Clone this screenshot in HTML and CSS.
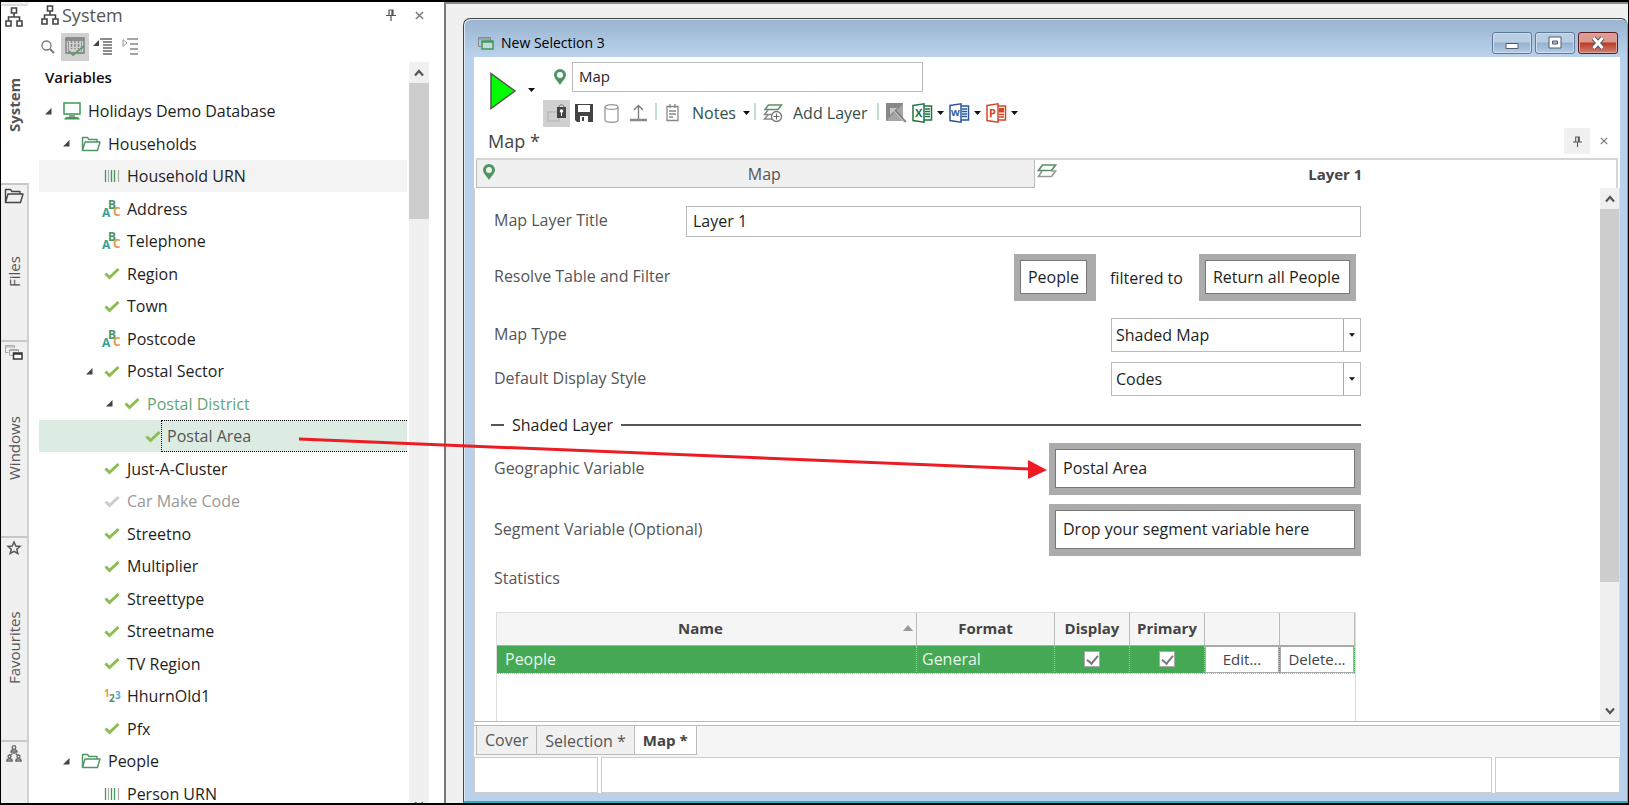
FILE: index.html
```html
<!DOCTYPE html>
<html lang="en">
<head>
    <meta charset="utf-8">
    <title>New Selection 3</title>
    <link rel="stylesheet" href="styles.css">
</head>
<body>
    <svg class="defs" aria-hidden="true">
        <symbol id="i-tree" viewBox="0 0 18 20"><path fill="none" stroke="currentColor" stroke-width="1.6" d="M6.500 1h5v5h-5zM9 6v4M3.500 14v-4h11v4M1 14h5v5H1zM12 14h5v5h-5z"/></symbol>
        <symbol id="i-folder" viewBox="0 0 20 16"><path fill="none" stroke="currentColor" stroke-width="1.4" stroke-linejoin="round" d="M1.500 14.500V1.500h5l1.500 2h8v2.500M1.500 14.500L4 6h15l-2.500 8.500z"/></symbol>
        <symbol id="i-check" viewBox="0 0 16 13"><path fill="none" stroke="currentColor" stroke-width="3" d="M1.500 6.500L5.500 10.500L14.500 2"/></symbol>
        <symbol id="i-open" viewBox="0 0 7 7"><path fill="#444" d="M6.500 0v6.500H0z"/></symbol>
        <symbol id="i-bars" viewBox="0 0 16 12"><path stroke="#3f9a54" stroke-width="1.300" d="M1.500 0v12M7.500 0v12M10.500 0v12"/><path stroke="#aaa" stroke-width="1.200" d="M4.500 0v12M14.500 0v12"/></symbol>
        <symbol id="i-pin" viewBox="0 0 10 12"><path fill="none" stroke="#555" stroke-width="1.200" d="M2.500 1h5M3 1v5M7 1v5M6 1v5M0 6.500h10M5 6.500V12"/></symbol>
        <symbol id="i-close" viewBox="0 0 10 10"><path stroke="#777" stroke-width="1.500" d="M1 1l8 8M9 1L1 9"/></symbol>
        <symbol id="i-marker" viewBox="0 0 12 16"><path fill="#4f9463" fill-rule="evenodd" d="M6 0a6 6 0 0 1 6 6c0 3.500-4 6.500-6 10C4 12.500 0 9.500 0 6a6 6 0 0 1 6-6zm0 3a3 3 0 1 0 0 6 3 3 0 0 0 0-6z"/></symbol>
        <symbol id="i-layers" viewBox="0 0 20 14"><path fill="none" stroke="#999" stroke-width="1.700" d="M5 7L1.500 12.500h13L18.500 7h-4"/><path fill="none" stroke="#5b8f68" stroke-width="1.700" d="M5.500 1h13L14.500 6.500H1.500z"/></symbol>
        <symbol id="i-up" viewBox="0 0 10 8"><path fill="none" stroke="#555" stroke-width="2.200" d="M1 6.500L5 2L9 6.500"/></symbol>
        <symbol id="i-down" viewBox="0 0 10 8"><path fill="none" stroke="#555" stroke-width="2.200" d="M1 1.500L5 6L9 1.500"/></symbol>
        <symbol id="i-caret" viewBox="0 0 7 4"><path fill="currentColor" d="M0 0h7L3.500 4z"/></symbol>
    </svg>

    <div class="app">
        <nav class="dock">
            <button class="dock-tab system active"><svg width="18" height="20"><use href="#i-tree"/></svg><span>System</span></button>
            <button class="dock-tab files"><svg width="20" height="16"><use href="#i-folder"/></svg><span>Files</span></button>
            <button class="dock-tab windows">
                <svg width="18" height="15" viewBox="0 0 18 15"><path fill="none" stroke="#aaa" d="M.5 8V.5h9V3M.5 2h9M.5 7.500h3M4.500 10V4.500h9V7M4.500 5.500h9M4.500 10.500h4"/><path fill="#fff" stroke="#333" stroke-width="1.500" d="M8.500 8h8.500v6H8.500zM8.500 9h8.500"/></svg>
                <span>Windows</span>
            </button>
            <button class="dock-tab favourites">
                <svg width="14" height="14" viewBox="0 0 14 14"><path fill="none" stroke="#555" stroke-width="1.500" d="M7 1l1.800 4 4.200.4-3.200 2.900 1 4.200L7 10.300l-3.800 2.200 1-4.200L1 5.400 5.200 5z"/></svg>
                <span>Favourites</span>
            </button>
            <button class="dock-tab" aria-label="Shared">
                <svg width="16" height="17" viewBox="0 0 16 17"><g fill="none" stroke="#666" stroke-width="1.300"><circle cx="8" cy="2.500" r="1.800"/><path d="M5 7c0-3 6-3 6 0zM8 7v2M4 10.500L6.500 8.500M12 10.500L9.500 8.500"/><circle cx="3.500" cy="11.500" r="1.500"/><path d="M.8 16c0-3 5.400-3 5.400 0z"/><circle cx="12.500" cy="11.500" r="1.500"/><path d="M9.800 16c0-3 5.400-3 5.400 0z"/></g></svg>
            </button>
        </nav>

        <aside class="panel">
            <header class="panel-head">
                <svg width="18" height="20"><use href="#i-tree"/></svg>
                <h1>System</h1>
                <button aria-label="Pin"><svg width="10" height="12"><use href="#i-pin"/></svg></button>
                <button aria-label="Close"><svg width="9" height="9"><use href="#i-close"/></svg></button>
            </header>
            <div class="panel-tools">
                <button aria-label="Search"><svg width="14" height="14" viewBox="0 0 14 14"><g fill="none" stroke="#777" stroke-width="1.300"><circle cx="5.500" cy="5.500" r="4.500"/><path stroke-width="2" d="M9 9l4 4"/></g></svg></button>
                <button class="pressed" aria-label="Show columns">
                    <svg width="20" height="19" viewBox="0 0 20 19"><path fill="none" stroke="#777" stroke-width="1.300" d="M1 1h18v15H1zM1 3h18"/><path stroke="#999" d="M3.500 3v13M16.500 3v13"/><path stroke="#888" stroke-width="1.500" stroke-dasharray="3 1" d="M6.500 3v9M10 3v9M13.500 3v9"/><path fill="none" stroke="#5b9c69" stroke-width="1.700" d="M4 14l4 4 11-9"/></svg>
                </button>
                <button aria-label="Collapse"><svg width="19" height="17" viewBox="0 0 19 17"><path fill="#444" d="M6 2v6H0z"/><path stroke="#666" stroke-width="1.500" d="M7 1h12M10 4h9M10 7h9M10 10h9M10 13h9M10 16h9"/></svg></button>
                <button aria-label="Expand"><svg width="16" height="17" viewBox="0 0 16 17"><path fill="none" stroke="#999" d="M1 1.500v7L5 5z"/><path stroke="#888" stroke-width="1.300" d="M5 1h11M8 6h8M8 11h8M8 16h8"/></svg></button>
            </div>
            <div class="panel-body">
                <div class="variables">
                    <h2>Variables</h2>
                    <ul class="tree">
                        <li class="l0"><svg class="arrow"><use href="#i-open"/></svg><svg width="18" height="18" viewBox="0 0 18 18"><path fill="#fff" stroke="#3f9a54" stroke-width="1.500" d="M1 1h16v11H1z"/><path fill="#999" d="M6 13h6v2H6z"/><path fill="#3f9a54" d="M3 15h12l2 2.500H1z"/></svg>Holidays Demo Database</li>
                        <li class="l1"><svg class="arrow"><use href="#i-open"/></svg><svg class="green" width="20" height="16"><use href="#i-folder"/></svg>Households</li>
                        <li class="l2 hover"><svg width="16" height="12"><use href="#i-bars"/></svg>Household URN</li>
                        <li class="l2"><svg class="abc" width="19" height="18" viewBox="0 0 19 18"><text x="0" y="17" fill="#2fa39a">A</text><text x="6" y="9" fill="#4f9463">B</text><text x="11" y="16" fill="#e59a4c">C</text></svg>Address</li>
                        <li class="l2"><svg class="abc" width="19" height="18" viewBox="0 0 19 18"><text x="0" y="17" fill="#2fa39a">A</text><text x="6" y="9" fill="#4f9463">B</text><text x="11" y="16" fill="#e59a4c">C</text></svg>Telephone</li>
                        <li class="l2"><svg class="tick"><use href="#i-check"/></svg>Region</li>
                        <li class="l2"><svg class="tick"><use href="#i-check"/></svg>Town</li>
                        <li class="l2"><svg class="abc" width="19" height="18" viewBox="0 0 19 18"><text x="0" y="17" fill="#2fa39a">A</text><text x="6" y="9" fill="#4f9463">B</text><text x="11" y="16" fill="#e59a4c">C</text></svg>Postcode</li>
                        <li class="l2 parent"><svg class="arrow"><use href="#i-open"/></svg><svg class="tick"><use href="#i-check"/></svg>Postal Sector</li>
                        <li class="l3 parent district"><svg class="arrow"><use href="#i-open"/></svg><svg class="tick"><use href="#i-check"/></svg>Postal District</li>
                        <li class="l4 selected"><svg class="tick"><use href="#i-check"/></svg><span>Postal Area</span></li>
                        <li class="l2"><svg class="tick"><use href="#i-check"/></svg>Just-A-Cluster</li>
                        <li class="l2 disabled"><svg class="tick"><use href="#i-check"/></svg>Car Make Code</li>
                        <li class="l2"><svg class="tick"><use href="#i-check"/></svg>Streetno</li>
                        <li class="l2"><svg class="tick"><use href="#i-check"/></svg>Multiplier</li>
                        <li class="l2"><svg class="tick"><use href="#i-check"/></svg>Streettype</li>
                        <li class="l2"><svg class="tick"><use href="#i-check"/></svg>Streetname</li>
                        <li class="l2"><svg class="tick"><use href="#i-check"/></svg>TV Region</li>
                        <li class="l2"><svg class="digits" width="17" height="14" viewBox="0 0 17 14"><text x="0" y="8" fill="#f0952f">1</text><text x="5" y="13" fill="#4f9463">2</text><text x="11" y="10" fill="#5ba6cf">3</text></svg>HhurnOld1</li>
                        <li class="l2"><svg class="tick"><use href="#i-check"/></svg>Pfx</li>
                        <li class="l1"><svg class="arrow"><use href="#i-open"/></svg><svg class="green" width="20" height="16"><use href="#i-folder"/></svg>People</li>
                        <li class="l2"><svg width="16" height="12"><use href="#i-bars"/></svg>Person URN</li>
                    </ul>
                </div>
                <div class="scroll tree-scroll">
                    <button aria-label="Scroll up"><svg width="10" height="8"><use href="#i-up"/></svg></button>
                    <div class="thumb"></div>
                    <button class="end" aria-label="Scroll down"><svg width="10" height="8"><use href="#i-down"/></svg></button>
                </div>
            </div>
        </aside>

        <main class="desktop">
            <section class="window">
                <header class="titlebar">
                    <svg width="16" height="14" viewBox="0 0 16 14"><path fill="none" stroke="#888" d="M3 10.500H.5v-9h12V4M.5 3h12"/><path fill="#c3dbe0" stroke="#3f9a54" stroke-width="1.500" d="M4 5h11v8H4zM4 6h11"/></svg>
                    <span>New Selection 3</span>
                    <div class="win-buttons">
                        <button aria-label="Minimise"><svg width="14" height="14" viewBox="0 0 14 14"><path fill="#fff" stroke="#555b6b" d="M1 7.500h12v5H1z"/></svg></button>
                        <button aria-label="Maximise"><svg width="14" height="14" viewBox="0 0 14 14"><path fill="#fff" stroke="#555b6b" d="M1 1h12v11H1z"/><path fill="#9db8d6" stroke="#555b6b" d="M4.500 5h5v3h-5z"/></svg></button>
                        <button class="close" aria-label="Close"><svg width="14" height="12" viewBox="0 0 14 12"><path stroke="#555b6b" stroke-width="5" d="M2.500 1l9 10M11.500 1l-9 10"/><path stroke="#fff" stroke-width="3" d="M2.500 1l9 10M11.500 1l-9 10"/></svg></button>
                    </div>
                </header>

                <div class="client">
                    <div class="run-bar">
                        <button aria-label="Run"><svg width="27" height="38" viewBox="0 0 27 38"><path fill="#0f0" stroke="#555" stroke-width="1.500" d="M1 1.500v35L25 19z"/></svg></button>
                        <button class="run-menu" aria-label="Run options"><svg class="caret"><use href="#i-caret"/></svg></button>
                        <div class="run-main">
                            <div class="name-row">
                                <svg width="12" height="16"><use href="#i-marker"/></svg>
                                <input type="text" value="Map" aria-label="Name">
                            </div>
                            <div class="toolbar">
                                <button class="pressed" aria-label="Lock"><svg width="19" height="18" viewBox="0 0 19 18"><path fill="none" stroke="#bbb" stroke-width="1.500" d="M1 8h11v9H1z"/><path fill="#444" d="M10 3h9v11h-9z"/><path fill="none" stroke="#777" d="M12 3c0-3 5-3 5 0"/><circle cx="14.500" cy="7" r="1.800" fill="#fff"/><path stroke="#fff" d="M14.500 8v4"/></svg></button>
                                <button class="t-save" aria-label="Save"><svg width="18" height="18" viewBox="0 0 18 18"><path fill="#444" fill-rule="evenodd" d="M0 0h18v18H2l-2-2zM3 1v7h12V1zM5 12v6h8v-6z"/><path fill="#444" d="M7 13h2v4H7z"/></svg></button>
                                <button class="t-data" aria-label="Database"><svg width="15" height="19" viewBox="0 0 15 19"><g fill="none" stroke="#999" stroke-width="1.300"><ellipse cx="7.500" cy="3" rx="6.500" ry="2.400"/><path d="M1 3v13c0 3 13 3 13 0V3"/></g></svg></button>
                                <button class="t-up" aria-label="Upload"><svg width="17" height="18" viewBox="0 0 17 18"><path fill="none" stroke="#777" stroke-width="1.300" d="M8.500 15V2M4 6l4.500-4.500L13 6"/><path stroke="#888" stroke-width="2.500" d="M0 16h17"/></svg></button>
                                <span class="sep"></span>
                                <button class="t-notes"><svg width="13" height="18" viewBox="0 0 13 18"><path fill="none" stroke="#888" stroke-width="1.300" d="M1 2.500h11v14H1zM3 7h7M3 10h7M3 13h4M4 0v4M9 0v4"/></svg>Notes<svg class="caret"><use href="#i-caret"/></svg></button>
                                <span class="sep"></span>
                                <button class="t-layer"><svg width="20" height="19" viewBox="0 0 20 19"><path fill="none" stroke="#5b8f68" stroke-width="1.500" d="M5.500 1h13L15 5.500H2z"/><path fill="none" stroke="#888" stroke-width="1.500" d="M5 6L1.500 10.500H10M5 11L1.500 15H9"/><circle cx="13.500" cy="12.500" r="5" fill="#fff" stroke="#777" stroke-width="1.300"/><path stroke="#666" d="M13.500 9.500v6M10.500 12.500h6"/></svg>Add Layer</button>
                                <span class="sep"></span>
                                <button class="t-wand" aria-label="Wand"><svg width="20" height="20" viewBox="0 0 20 20"><path fill="#888" d="M0 0h17v18H0z"/><path fill="#a5a5a5" d="M0 18L17 1v17z"/><path fill="#c8c8c8" d="M4 5h7l-7 7z"/><path stroke="#c8c8c8" stroke-width="2" d="M8 7l11 12"/><path stroke="#777" stroke-width="1.500" d="M9 7l11 12"/></svg></button>
                                <button class="office excel" aria-label="Export to Excel"><svg width="21" height="20" viewBox="0 0 21 20"><path fill="#fff" stroke="currentColor" stroke-width="1.500" d="M1 2.500L12 .8v18.400L1 17.500zM12 3h7.500v14H12"/><path stroke="currentColor" stroke-width="1.300" d="M13 6h5M13 8.500h5M13 11h5M13 13.500h5"/><text x="3" y="14" font-size="11">X</text></svg><svg class="caret"><use href="#i-caret"/></svg></button>
                                <button class="office word" aria-label="Export to Word"><svg width="21" height="20" viewBox="0 0 21 20"><path fill="#fff" stroke="currentColor" stroke-width="1.500" d="M1 2.500L12 .8v18.400L1 17.500zM12 3h7.500v14H12"/><path stroke="currentColor" stroke-width="1.300" d="M13 6h5M13 8.500h5M13 11h5M13 13.500h5"/><text x="2" y="13" font-size="9">W</text></svg><svg class="caret"><use href="#i-caret"/></svg></button>
                                <button class="office ppt" aria-label="Export to PowerPoint"><svg width="21" height="20" viewBox="0 0 21 20"><path fill="#fff" stroke="currentColor" stroke-width="1.500" d="M1 2.500L12 .8v18.400L1 17.500zM12 3h7.500v14H12"/><path fill="currentColor" d="M13 5h5v4.500h-5z"/><path stroke="currentColor" stroke-width="1.300" d="M13 11.500h5M13 14h5"/><text x="3" y="14" font-size="11">P</text></svg><svg class="caret"><use href="#i-caret"/></svg></button>
                            </div>
                        </div>
                    </div>

                    <div class="page-head">
                        <h2>Map *</h2>
                        <button class="pin" aria-label="Pin"><svg width="9" height="11"><use href="#i-pin"/></svg></button>
                        <button aria-label="Close"><svg width="8" height="8"><use href="#i-close"/></svg></button>
                    </div>

                    <div class="layer-tabs">
                        <button class="layer-tab"><svg width="12" height="16"><use href="#i-marker"/></svg><span>Map</span></button>
                        <button class="layer-tab active"><svg width="20" height="14"><use href="#i-layers"/></svg><span>Layer 1</span></button>
                    </div>

                    <div class="editor">
                        <form class="form">
                            <div class="row">
                                <label class="title-label" for="title">Map Layer Title</label>
                                <input id="title" type="text" value="Layer 1">
                            </div>
                            <div class="row resolve">
                                <label for="table">Resolve Table and Filter</label>
                                <button type="button" class="drop short" id="table"><span>People</span></button>
                                <span class="filtered">filtered to</span>
                                <button type="button" class="drop filter"><span>Return all People</span></button>
                            </div>
                            <div class="row type">
                                <label for="type">Map Type</label>
                                <div class="select"><select id="type"><option>Shaded Map</option></select><svg class="caret"><use href="#i-caret"/></svg></div>
                            </div>
                            <div class="row">
                                <label for="style">Default Display Style</label>
                                <div class="select"><select id="style"><option>Codes</option></select><svg class="caret"><use href="#i-caret"/></svg></div>
                            </div>
                            <h3 class="legend">Shaded Layer</h3>
                            <div class="row geo">
                                <label for="geo">Geographic Variable</label>
                                <button type="button" class="drop long" id="geo"><span>Postal Area</span></button>
                            </div>
                            <div class="row segment">
                                <label for="segment">Segment Variable (Optional)</label>
                                <button type="button" class="drop long" id="segment"><span>Drop your segment variable here</span></button>
                            </div>
                            <div class="row stats-label">Statistics</div>
                            <div class="stats">
                                <table>
                                    <thead>
                                        <tr>
                                            <th class="c-name">Name<svg class="sort" width="10" height="6" viewBox="0 0 10 6"><path fill="#999" d="M0 6h10L5 0z"/></svg></th>
                                            <th class="c-format">Format</th>
                                            <th class="c-small">Display</th>
                                            <th class="c-small">Primary</th>
                                            <th class="c-small"></th>
                                            <th class="c-small"></th>
                                        </tr>
                                    </thead>
                                    <tbody>
                                        <tr>
                                            <td class="name">People</td>
                                            <td>General</td>
                                            <td class="mid"><input type="checkbox" aria-label="Display" checked></td>
                                            <td class="mid"><input type="checkbox" aria-label="Primary" checked></td>
                                            <td class="action"><button type="button">Edit...</button></td>
                                            <td class="action"><button type="button">Delete...</button></td>
                                        </tr>
                                    </tbody>
                                </table>
                            </div>
                        </form>
                        <div class="scroll form-scroll">
                            <button aria-label="Scroll up"><svg width="10" height="8"><use href="#i-up"/></svg></button>
                            <div class="thumb"></div>
                            <button class="end" aria-label="Scroll down"><svg width="10" height="8"><use href="#i-down"/></svg></button>
                        </div>
                    </div>

                    <div class="page-tabs">
                        <button>Cover</button>
                        <button class="second">Selection *</button>
                        <button class="active">Map *</button>
                    </div>
                    <footer class="status">
                        <div class="cell-left"></div>
                        <div class="cell-mid"></div>
                        <div class="cell-right"></div>
                    </footer>
                </div>
            </section>
        </main>

        <svg class="drag-arrow" width="750" height="50" viewBox="0 0 750 50">
            <path stroke="#ed1c24" stroke-width="3" d="M0 10L732 40"/>
            <path fill="#ed1c24" d="M729 31v19l19-9z"/>
        </svg>
    </div>
</body>
</html>
```
FILE: styles.css
```css
* {
    box-sizing: border-box;
}

body {
    margin: 0;
    font-family: "Open Sans", "Noto Sans", sans-serif;
    font-size: 16px;
    line-height: 20px;
    color: #1e1e1e;
}

h1, h2, h3, ul {
    margin: 0;
    padding: 0;
    font-weight: normal;
}

button, input, select {
    font: inherit;
    color: inherit;
    margin: 0;
}

button {
    display: flex;
    align-items: center;
    justify-content: center;
    padding: 0;
    border: none;
    background: none;
}

svg {
    flex: none;
    display: block;
    overflow: visible;
}

.defs {
    position: absolute;
    width: 0;
    height: 0;
}

.caret {
    width: 7px;
    height: 4px;
    color: #111;
}

.app {
    position: relative;
    display: flex;
    height: 100vh;
    overflow: hidden;
    border: 1px solid #000;
    border-width: 2px 1px 2px 1px;
    background: #fff;
}

/* docked tabs on the left edge */
.dock {
    flex: none;
    width: 28px;
    display: flex;
    flex-direction: column;
    padding-top: 2px;
    background: #f0f0f0;
    font-size: 15px;
}

.dock-tab {
    flex-direction: column;
    justify-content: flex-start;
    padding: 3px 0 0;
    border-top: 2px solid #c8c8c8;
    border-right: 2px solid #d2d2d2;
    color: #555;
}

.dock-tab span {
    flex: 1;
    writing-mode: vertical-rl;
    transform: rotate(180deg);
    text-align: center;
}

.dock-tab.active {
    padding-top: 1px;
    background: #fff;
    border-top-color: #ddd;
    border-right-color: #fff;
    font-weight: bold;
}

.dock-tab svg {
    color: #444;
}

.system { height: 179px; }
.files { height: 157px; }
.windows { height: 196px; }
.favourites { height: 204px; }

.dock-tab:last-child {
    flex: 1;
}

/* variable tree */
.panel {
    flex: none;
    width: 415px;
    display: flex;
    flex-direction: column;
    min-height: 0;
}

.panel-head {
    display: flex;
    align-items: center;
    height: 29px;
    padding: 0 11px 3px 12px;
    color: #444;
}

.panel-head h1 {
    flex: 1;
    padding-left: 3px;
    font-size: 18px;
    color: #555;
}

.panel-head button {
    width: 28px;
    height: 26px;
}

.panel-tools {
    display: flex;
    align-items: center;
    height: 31px;
    padding-left: 12px;
}

.panel-tools button {
    height: 28px;
    margin-right: 6px;
}

.panel-tools .pressed {
    width: 28px;
    margin-right: 4px;
}

.panel-tools button:nth-child(3) {
    margin-right: 10px;
}

.pressed {
    background: #d0d0d0;
}

.panel-body {
    flex: 1;
    display: flex;
    min-height: 0;
    padding-right: 15px;
}

.variables {
    flex: 1;
    padding: 0 2px 0 10px;
    overflow: hidden;
}

.variables h2 {
    height: 33px;
    padding-left: 6px;
    line-height: 30px;
    font-size: 15px;
    font-weight: 600;
    color: #111;
}

.tree li {
    display: flex;
    align-items: center;
    gap: 7px;
    height: 32px;
    white-space: nowrap;
}

.tree li:nth-child(even) {
    height: 33px;
}

.arrow {
    width: 7px;
    height: 7px;
    margin-right: 4px;
}

.tick {
    width: 16px;
    height: 13px;
    color: #8cbd4f;
}

.green {
    color: #4f9463;
}

.abc {
    margin-left: -2px;
    margin-right: -1px;
    font-size: 12px;
    font-weight: bold;
}

.digits {
    margin-right: -1px;
    font-size: 10px;
    font-weight: bold;
}

.l0 { padding-left: 6px; }
.l1 { padding-left: 24px; }
.l2 { padding-left: 65px; }
.l2.parent { padding-left: 47px; }
.l3.parent { padding-left: 67px; }
.l4 { padding-left: 106px; }

.hover {
    background: #f3f3f3;
}

.district {
    color: #5fa672;
}

.disabled {
    color: #999;
}

.disabled .tick {
    color: #ccc;
}

.tree .selected {
    gap: 0;
    background: #dcece2;
    color: #555;
}

.selected span {
    flex: 1;
    align-self: stretch;
    display: flex;
    align-items: center;
    padding-left: 5px;
    border: 1px dotted #000;
    border-right: none;
}

/* scroll bars */
.scroll {
    flex: none;
    display: flex;
    flex-direction: column;
    background: #f0f0f0;
}

.scroll button {
    flex: none;
    height: 21px;
}

.scroll .end {
    margin-top: auto;
}

.thumb {
    background: #cdcdcd;
}

.tree-scroll {
    width: 20px;
}

.tree-scroll .thumb {
    height: 136px;
}

.tree-scroll .end {
    margin-bottom: -12px;
}

/* document area */
.desktop {
    flex: 1;
    min-width: 0;
    display: flex;
    padding: 14px 0 0 17px;
    background: #f0f0f0;
    border-top: 2px solid #8a8a8a;
    border-left: 2px solid #777;
}

.window {
    flex: 1;
    min-width: 0;
    display: flex;
    flex-direction: column;
    padding: 1px 7px 8px 10px;
    border: 1px solid #444;
    border-right: 1px solid #3cb6c8;
    border-bottom: 2px solid #2badc0;
    border-radius: 7px 7px 0 0;
    box-shadow: inset 1px 1px 0 #dfe9f3;
    background: linear-gradient(#99b4d1, #b9d1ea 37px);
}

.titlebar {
    display: flex;
    align-items: center;
    gap: 7px;
    height: 37px;
    padding: 8px 2px 0 4px;
    font-size: 14px;
    color: #000;
}

.win-buttons {
    display: flex;
    gap: 3px;
    margin-left: auto;
}

.win-buttons button {
    width: 40px;
    height: 22px;
    border: 1px solid #5f7896;
    border-radius: 3px;
    box-shadow: inset 0 0 0 1px #cfdeee;
    background: linear-gradient(#b9cde3 45%, #94b1d0 50%, #b4cce6);
}

.win-buttons .close {
    border-color: #5a1820;
    box-shadow: inset 0 0 0 1px #e0a79f;
    background: linear-gradient(#dd9a90 45%, #bd3b26 50%, #d08273);
}

.client {
    flex: 1;
    min-height: 0;
    display: flex;
    flex-direction: column;
    background: #fff;
}

.run-bar {
    display: flex;
    align-items: flex-start;
    padding: 5px 0 0 16px;
}

.run-bar > button:first-child {
    margin-top: 10px;
}

.run-menu {
    width: 7px;
    height: 20px;
    margin: 18px 8px 0 11px;
}

.name-row {
    display: flex;
    align-items: center;
    gap: 6px;
    padding-left: 11px;
}

input[type="text"] {
    height: 31px;
    padding: 0 6px 2px;
    border: 1px solid #bbb;
    background: #fff;
    color: #1e1e1e;
}

.name-row input {
    width: 351px;
    height: 30px;
    font-size: 15px;
}

.toolbar {
    display: flex;
    align-items: center;
    height: 28px;
    margin-top: 7px;
    color: #33504a;
}

.toolbar .pressed {
    width: 27px;
    height: 27px;
}

.sep {
    width: 2px;
    height: 17px;
    margin-bottom: 3px;
    background: #c3ddd0;
}

.t-save { margin-left: 5px; }
.t-data { margin-left: 11px; }
.t-up { margin: 0 8px 0 11px; }

.t-notes {
    gap: 7px;
    margin: 0 4px 0 9px;
}

.t-notes svg:first-child {
    margin-right: 6px;
}

.t-layer {
    gap: 10px;
    margin: 0 9px 0 7px;
}

.t-wand { margin: 0 6px 0 7px; }

.office {
    gap: 4px;
    margin-right: 5px;
}

.office text {
    font-weight: bold;
    fill: currentColor;
}

.excel { color: #217346; }
.word { color: #2b579a; }
.ppt { color: #d24726; }

.page-head {
    display: flex;
    align-items: center;
    height: 31px;
    padding: 0 8px 3px 14px;
}

.page-head h2 {
    flex: 1;
    font-size: 18px;
    color: #444;
}

.page-head button {
    width: 16px;
    height: 26px;
}

.page-head .pin {
    width: 26px;
    margin-right: 6px;
    background: #f0f0f0;
}

.layer-tabs {
    display: flex;
    height: 30px;
    margin: 0 2px;
    border-top: 2px solid #d5d5d5;
    border-right: 2px solid #d5d5d5;
}

.layer-tab {
    flex: 1;
    align-items: flex-start;
    padding: 3px 2px;
    color: #555;
}

.layer-tab svg {
    margin-top: 1px;
}

.layer-tab span {
    flex: 1;
    line-height: 22px;
}

.layer-tab:first-child {
    flex: none;
    width: 49%;
    padding-left: 6px;
    padding-right: 0;
    border: 1px solid #bbb;
    border-top: none;
    background: #f0f0f0;
}

.layer-tab.active {
    font-size: 15px;
    font-weight: bold;
    color: #444;
}

.editor {
    flex: 1;
    min-height: 0;
    display: flex;
    border-left: 1px solid #ccc;
    border-bottom: 1px solid #bbb;
}

.form {
    flex: 1;
    min-width: 0;
    display: flex;
    flex-direction: column;
    padding: 18px 239px 0 16px;
}

.form-scroll {
    width: 20px;
    border-right: 1px solid #ddd;
}

.form-scroll .thumb {
    flex: 0 1 373px;
}

/* layer form */
.row {
    flex: none;
    display: flex;
    align-items: center;
    padding-left: 3px;
    margin-bottom: 10px;
}

.row label {
    margin-right: auto;
    padding-bottom: 3px;
    color: #555;
}

.row .title-label {
    width: 192px;
    margin-right: 0;
}

.row input {
    flex: 1;
}

.row.resolve {
    margin: 7px 5px 17px 0;
}

.filtered {
    margin: 0 16px 0 14px;
}

.drop {
    height: 47px;
    border: 6px solid #ababab;
    border-bottom-width: 7px;
    background: #fff;
}

.drop span {
    flex: 1;
    display: flex;
    align-items: center;
    height: 100%;
    padding: 0 7px;
    border: 1px solid #777;
}

.drop.short {
    border-right-width: 9px;
}

.drop.filter span {
    padding-right: 9px;
}

.drop.long {
    width: 312px;
    height: 52px;
}

.drop.long span {
    padding-bottom: 2px;
}

.select {
    position: relative;
    width: 250px;
    height: 34px;
    border: 1px solid #bbb;
}

.select select {
    width: 100%;
    height: 100%;
    padding: 0 4px;
    border: none;
    background: linear-gradient(#aaa, #aaa) right 16px top / 1px 100% no-repeat #fff;
    appearance: none;
}

.select .caret {
    position: absolute;
    right: 5px;
    top: 14px;
    width: 6px;
}

.legend {
    flex: none;
    display: flex;
    align-items: center;
    gap: 8px;
    height: 24px;
    margin: 7px 0 6px;
    font-size: 16px;
}

.legend::before,
.legend::after {
    content: "";
    width: 13px;
    height: 2px;
    background: #555;
}

.legend::after {
    flex: 1;
}

.row.geo {
    margin-bottom: 9px;
}

.row.segment {
    margin-bottom: 12px;
}

.row.stats-label {
    color: #555;
    margin-bottom: 24px;
}

.stats {
    flex: 1;
    min-height: 0;
    margin: 0 5px;
    border: 1px solid #ddd;
    border-bottom: none;
}

.stats table {
    width: 100%;
    table-layout: fixed;
    border-collapse: collapse;
}

.stats th {
    position: relative;
    height: 32px;
    padding: 0 0 2px;
    border-right: 1px solid #bbb;
    border-bottom: 1px solid #aaa;
    background: #f5f5f5;
    font-size: 15px;
    color: #444;
}

.stats .c-name {
    padding-right: 12px;
}

.c-format { width: 138px; }
.c-small { width: 75px; }

.sort {
    position: absolute;
    right: 3px;
    top: 12px;
}

.stats td {
    height: 28px;
    padding: 0 5px;
    border-right: 1px dotted #9bd0a4;
    border-bottom: 1px dotted #9bd0a4;
    background: #45a855;
    color: #e8f5ea;
}

.stats td.name {
    padding-left: 8px;
}

.stats td.mid {
    text-align: center;
}

.stats td.action {
    padding: 0;
}

.action button {
    width: 100%;
    height: 27px;
    border: 1px solid #aaa;
    background: #fff;
    font-size: 15px;
    color: #444;
}

.mid input {
    position: relative;
    display: block;
    width: 16px;
    height: 16px;
    margin: 0 auto;
    border: 1px solid #ababab;
    background: #fff;
    appearance: none;
}

.mid input:checked::after {
    content: "";
    position: absolute;
    left: 4px;
    top: 1px;
    width: 5px;
    height: 9px;
    border: solid #777;
    border-width: 0 2px 2px 0;
    transform: rotate(40deg);
}

/* page tabs and status bar */
.page-tabs {
    display: flex;
    align-items: flex-start;
    height: 32px;
    margin-top: 3px;
    padding-left: 2px;
    border-top: 1px solid #bbb;
    background: #f5f5f5;
}

.page-tabs button {
    height: 29px;
    padding: 0 8px;
    border: 1px solid #bbb;
    border-top: none;
    background: #f0f0f0;
    color: #555;
}

.page-tabs .second {
    padding: 2px 8px 0;
    border-left: none;
    border-right: none;
}

.page-tabs .active {
    background: #fff;
    font-size: 15px;
    font-weight: bold;
    color: #444;
}

.status {
    display: flex;
    gap: 3px;
    height: 36px;
}

.status div {
    border: 1px solid #ccc;
}

.cell-left { width: 124px; }
.cell-mid { flex: 1; }
.cell-right { width: 125px; }

/* drag hint from the tree to the drop box */
.drag-arrow {
    position: absolute;
    left: 298px;
    top: 427px;
    pointer-events: none;
}
```
